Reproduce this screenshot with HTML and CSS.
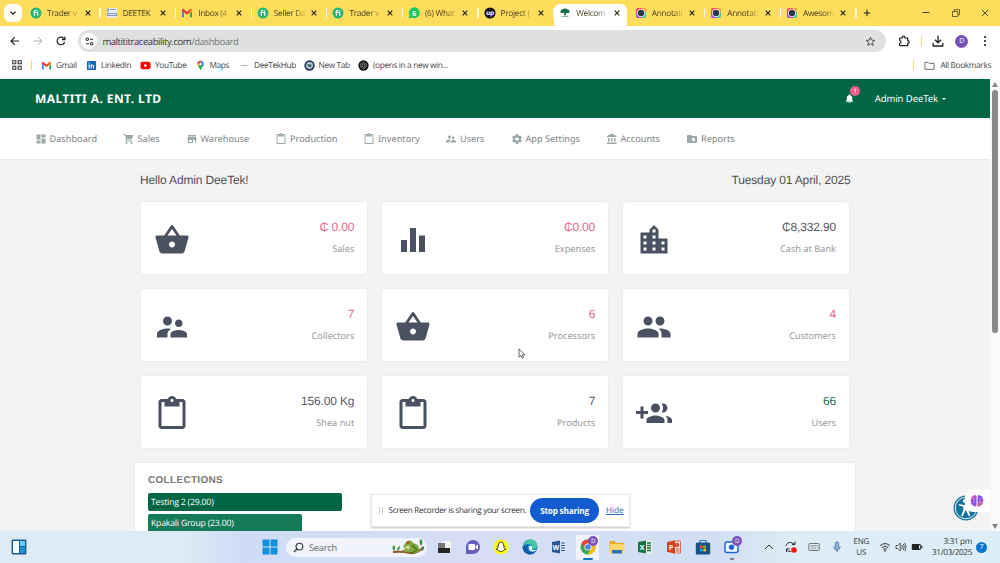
FILE: index.html
```html
<!DOCTYPE html>
<html lang="en">
<head>
  <meta charset="UTF-8">
  <meta name="viewport" content="width=device-width, initial-scale=1.0">
  <title>Welcome</title>
  <link rel="stylesheet" href="styles.css">
</head>
<body>
  <!-- Shared icons -->
  <svg class="sprite" xmlns="http://www.w3.org/2000/svg">
    <symbol id="basket" viewBox="0 0 24 24"><path d="M17.21 9l-4.38-6.56c-.19-.28-.51-.42-.83-.42-.32 0-.64.14-.83.43L6.79 9H2c-.55 0-1 .45-1 1 0 .09.01.18.04.27l2.54 9.27c.23.84 1 1.46 1.92 1.46h13c.92 0 1.69-.62 1.93-1.46l2.54-9.27L23 10c0-.55-.45-1-1-1h-4.79zM9 9l3-4.4L15 9H9zm3 8c-1.1 0-2-.9-2-2s.9-2 2-2 2 .9 2 2-.9 2-2 2z"/></symbol>
    <symbol id="chart" viewBox="0 0 24 24"><path d="M10 20h4V4h-4v16zm-6 0h4v-8H4v8zM16 9v11h4V9h-4z"/></symbol>
    <symbol id="city" viewBox="0 0 24 24"><path d="M15 11V5l-3-3-3 3v2H3v14h18V11h-6zm-8 8H5v-2h2v2zm0-4H5v-2h2v2zm0-4H5V9h2v2zm6 8h-2v-2h2v2zm0-4h-2v-2h2v2zm0-4h-2V9h2v2zm0-4h-2V5h2v2zm6 12h-2v-2h2v2zm0-4h-2v-2h2v2z"/></symbol>
    <symbol id="supervisor" viewBox="0 0 24 24"><path d="M16.5 12c1.38 0 2.49-1.12 2.49-2.5S17.88 7 16.5 7C15.12 7 14 8.12 14 9.5s1.12 2.5 2.5 2.5zM9 11c1.66 0 2.99-1.34 2.99-3S10.66 5 9 5C7.34 5 6 6.34 6 8s1.34 3 3 3zm7.5 3c-1.83 0-5.5.92-5.5 2.75V19h11v-2.25c0-1.83-3.67-2.75-5.5-2.75zM9 13c-2.33 0-7 1.17-7 3.5V19h7v-2.25c0-.85.33-2.34 2.37-3.47C10.5 13.1 9.66 13 9 13z"/></symbol>
    <symbol id="people" viewBox="0 0 24 24"><path d="M16 11c1.66 0 2.99-1.34 2.99-3S17.66 5 16 5c-1.66 0-3 1.34-3 3s1.34 3 3 3zm-8 0c1.66 0 2.99-1.34 2.99-3S9.66 5 8 5C6.34 5 5 6.34 5 8s1.34 3 3 3zm0 2c-2.33 0-7 1.17-7 3.5V19h14v-2.5c0-2.33-4.67-3.5-7-3.5zm8 0c-.29 0-.62.02-.97.05 1.16.84 1.97 1.97 1.97 3.45V19h6v-2.5c0-2.33-4.67-3.5-7-3.5z"/></symbol>
    <symbol id="paste" viewBox="0 0 24 24"><path d="M19 2h-4.18C14.4.84 13.3 0 12 0c-1.3 0-2.4.84-2.82 2H5c-1.1 0-2 .9-2 2v16c0 1.1.9 2 2 2h14c1.1 0 2-.9 2-2V4c0-1.1-.9-2-2-2zm-7 0c.55 0 1 .45 1 1s-.45 1-1 1-1-.45-1-1 .45-1 1-1zm7 18H5V4h2v3h10V4h2v16z"/></symbol>
    <symbol id="group-add" viewBox="0 0 24 24"><path d="M8 10H5V7H3v3H0v2h3v3h2v-3h3v-2zm10 1c1.66 0 2.99-1.34 2.99-3S19.66 5 18 5c-.32 0-.63.05-.91.14.57.81.9 1.79.9 2.86s-.34 2.04-.9 2.86c.28.09.59.14.91.14zm-5 0c1.66 0 2.99-1.34 2.99-3S14.66 5 13 5c-1.66 0-3 1.34-3 3s1.34 3 3 3zm6.62 2.16c.83.73 1.38 1.66 1.38 2.84v2h3v-2c0-1.54-2.37-2.49-4.38-2.84zM13 13c-2 0-6 1-6 3v2h12v-2c0-2-4-3-6-3z"/></symbol>
    <symbol id="dashboard" viewBox="0 0 24 24"><path d="M3 13h8V3H3v10zm0 8h8v-6H3v6zm10 0h8V11h-8v10zm0-18v6h8V3h-8z"/></symbol>
    <symbol id="cart" viewBox="0 0 24 24"><path d="M7 18c-1.1 0-1.99.9-1.99 2S5.9 22 7 22s2-.9 2-2-.9-2-2-2zM1 2v2h2l3.6 7.59-1.35 2.45c-.16.28-.25.61-.25.96 0 1.1.9 2 2 2h12v-2H7.42c-.14 0-.25-.11-.25-.25l.03-.12.9-1.63h7.45c.75 0 1.41-.41 1.75-1.03l3.58-6.49c.08-.14.12-.31.12-.48 0-.55-.45-1-1-1H5.21l-.94-2H1zm16 16c-1.1 0-1.99.9-1.99 2s.89 2 1.99 2 2-.9 2-2-.9-2-2-2z"/></symbol>
    <symbol id="store" viewBox="0 0 24 24"><path d="M20 4H4v2h16V4zm1 10v-2l-1-5H4l-1 5v2h1v6h10v-6h4v6h2v-6h1zm-9 4H6v-4h6v4z"/></symbol>
    <symbol id="settings" viewBox="0 0 24 24"><path d="M19.43 12.98c.04-.32.07-.64.07-.98s-.03-.66-.07-.98l2.11-1.65c.19-.15.24-.42.12-.64l-2-3.46c-.12-.22-.39-.3-.61-.22l-2.49 1c-.52-.4-1.08-.73-1.69-.98l-.38-2.65C14.46 2.18 14.25 2 14 2h-4c-.25 0-.46.18-.49.42l-.38 2.65c-.61.25-1.17.59-1.69.98l-2.49-1c-.23-.09-.49 0-.61.22l-2 3.46c-.13.22-.07.49.12.64l2.11 1.65c-.04.32-.07.65-.07.98s.03.66.07.98l-2.11 1.65c-.19.15-.24.42-.12.64l2 3.46c.12.22.39.3.61.22l2.49-1c.52.4 1.08.73 1.69.98l.38 2.65c.03.24.24.42.49.42h4c.25 0 .46-.18.49-.42l.38-2.65c.61-.25 1.17-.59 1.69-.98l2.49 1c.23.09.49 0 .61-.22l2-3.46c.12-.22.07-.49-.12-.64l-2.11-1.65zM12 15.5c-1.93 0-3.5-1.57-3.5-3.5s1.57-3.5 3.5-3.5 3.5 1.57 3.5 3.5-1.57 3.5-3.5 3.5z"/></symbol>
    <symbol id="bank" viewBox="0 0 24 24"><path d="M4 10v7h3v-7H4zm6 0v7h3v-7h-3zM2 22h19v-3H2v3zm14-12v7h3v-7h-3zm-4.5-9L2 6v2h19V6l-9.500-5z"/></symbol>
    <symbol id="folder-star" viewBox="0 0 24 24"><path d="M20 6h-8l-2-2H4c-1.1 0-2 .9-2 2v12c0 1.1.9 2 2 2h16c1.1 0 2-.9 2-2V8c0-1.1-.9-2-2-2zm-2.06 11L15 15.28 12.06 17l.78-3.33-2.59-2.24 3.41-.29L15 8l1.34 3.14 3.41.29-2.59 2.24.78 3.33z"/></symbol>
    <symbol id="bell" viewBox="0 0 24 24"><path d="M12 22c1.1 0 2-.9 2-2h-4c0 1.1.89 2 2 2zm6-6v-5c0-3.07-1.64-5.64-4.5-6.32V4c0-.83-.67-1.5-1.5-1.5s-1.5.67-1.5 1.5v.68C7.63 5.36 6 7.92 6 11v5l-2 2v1h16v-1l-2-2z"/></symbol>
    <symbol id="close" viewBox="0 0 8 8"><path d="M1.7 1.7l4.6 4.6M6.3 1.7L1.7 6.3" fill="none" stroke="#2b2614" stroke-width="1.2"/></symbol>
    <symbol id="fiverr" viewBox="0 0 12 12"><circle cx="6" cy="6" r="5.5" fill="#22b573"/><path d="M4.4 8.8V4.7q0-1.5 1.6-1.3M3.3 5.4H7.7V8.8" fill="none" stroke="#fff" stroke-width="1.2"/><circle cx="7.7" cy="3.6" r=".7" fill="#fff"/></symbol>
    <symbol id="gmail" viewBox="0 0 12 10"><path d="M1 9.3V2.4h2v6.9z" fill="#4285f4"/><path d="M9 9.3V2.4h2v6.9z" fill="#34a853"/><path d="M1 3V1.2L2.3.8 6 3.8 9.7.8l1.3.6V3L6 6.7z" fill="#ea4335"/><path d="M9 3l2-1.5v2L9 5z" fill="#fbbc04"/></symbol>
    <symbol id="lens" viewBox="0 0 12 12"><path d="M1 3a2 2 0 0 1 2-2h4L6 6 1 8z" fill="#f24e6c"/><path d="M7 1h2a2 2 0 0 1 2 2v3H6z" fill="#ff9c3b"/><path d="M11 5v4a2 2 0 0 1-2 2H6V6z" fill="#43c59a"/><path d="M7 11H3a2 2 0 0 1-2-2V6l5-1z" fill="#a44de0"/><circle cx="6" cy="6" r="3.9" fill="#fff"/><circle cx="6" cy="6" r="3.2" fill="#29384f"/></symbol>
    <symbol id="chrome" viewBox="0 0 16 16"><circle cx="8" cy="8" r="7.5" fill="#34a853"/><path d="M1.5 4.2A7.5 7.5 0 0 1 14.6 4.5H8L5 10z" fill="#ea4335"/><path d="M14.6 4.5A7.5 7.5 0 0 1 7.7 15.5L11 9.5 8 4.5z" fill="#fbbc04"/><circle cx="8" cy="8" r="3.6" fill="#fff"/><circle cx="8" cy="8" r="2.8" fill="#4285f4"/></symbol>
  </svg>

  <!-- Browser tabs -->
  <div class="tab-strip">
    <div class="tab-search"><svg viewBox="0 0 8 8"><path d="M1.5 2.8L4 5.2l2.5-2.4" fill="none" stroke="#222" stroke-width="1.3"/></svg></div>
    <div class="tabs">
      <div class="tab"><svg class="favicon"><use href="#fiverr"/></svg><span>Trader v</span><svg class="close"><use href="#close"/></svg></div>
      <div class="tab"><svg class="favicon" viewBox="0 0 12 12"><path d="M1 1h10v10H1z" fill="#e8edf5"/><path d="M1 1.5h2v3H1zM4 2h6v1H4z" fill="#7fa0d8"/><path d="M1 6h10v3H1z" fill="#7d9ace"/><path d="M2 7.5h8" stroke="#dce6f5"/></svg><span class="whole">DEETEK</span><svg class="close"><use href="#close"/></svg></div>
      <div class="tab"><svg class="favicon"><use href="#gmail"/></svg><span>Inbox (4</span><svg class="close"><use href="#close"/></svg></div>
      <div class="tab"><svg class="favicon"><use href="#fiverr"/></svg><span>Seller Da</span><svg class="close"><use href="#close"/></svg></div>
      <div class="tab"><svg class="favicon"><use href="#fiverr"/></svg><span>Trader v</span><svg class="close"><use href="#close"/></svg></div>
      <div class="tab"><svg class="favicon" viewBox="0 0 12 12"><path d="M.5 11.5l1-3A5.5 5.5 0 1 1 4 10.8z" fill="#20c760"/><text x="6" y="8.6" font-size="7" font-weight="700" text-anchor="middle" fill="#fff">6</text></svg><span>(6) What</span><svg class="close"><use href="#close"/></svg></div>
      <div class="tab"><svg class="favicon" viewBox="0 0 12 12"><circle cx="6" cy="6" r="5.6" fill="#111"/><text x="6" y="8" font-size="6.5" font-weight="700" text-anchor="middle" fill="#fff">up</text></svg><span>Project (</span><svg class="close"><use href="#close"/></svg></div>
      <div class="tab active"><svg class="favicon" viewBox="0 0 12 12"><path d="M1.5 5.5Q1 3 3.5 2.600 6 .6 8.500 2.600 11 3 10.500 5.500 8 6.500 6.800 5.800L7 8.200H5l.2-2.400Q3 6.500 1.500 5.500z" fill="#146b48"/><path d="M2.500 9h7v1h-7z" fill="#89b8a2"/></svg><span>Welcom</span><svg class="close"><use href="#close"/></svg></div>
      <div class="tab"><svg class="favicon"><use href="#lens"/></svg><span>Annotati</span><svg class="close"><use href="#close"/></svg></div>
      <div class="tab"><svg class="favicon"><use href="#lens"/></svg><span>Annotati</span><svg class="close"><use href="#close"/></svg></div>
      <div class="tab"><svg class="favicon"><use href="#lens"/></svg><span>Awesom</span><svg class="close"><use href="#close"/></svg></div>
    </div>
    <svg class="new-tab" viewBox="0 0 8 8"><path d="M4 .7v6.6M.7 4h6.6" stroke="#222" stroke-width="1.1"/></svg>
    <div class="window-controls">
      <svg viewBox="0 0 10 10"><path d="M1.5 4.500h7" stroke="#4b4220"/></svg>
      <svg viewBox="0 0 10 10"><path d="M1.5 3.5h5.3v5H1.5zM3.3 3.3V1.600h5.200v5.100H7" fill="none" stroke="#4b4220" stroke-width=".8"/></svg>
      <svg viewBox="0 0 10 10"><path d="M2 2l6 6M8 2L2 8" stroke="#4b4220" stroke-width=".9"/></svg>
    </div>
  </div>

  <!-- Address bar -->
  <div class="toolbar">
    <svg class="tool" viewBox="0 0 12 12"><path d="M10 6H2.2M5.8 2.2L2 6l3.8 3.8" fill="none" stroke="#222" stroke-width="1.2"/></svg>
    <svg class="tool" viewBox="0 0 12 12"><path d="M2 6h7.8M6.2 2.2L10 6 6.2 9.8" fill="none" stroke="#aaa"/></svg>
    <svg class="tool" viewBox="0 0 12 12"><path d="M9.6 7A3.8 3.8 0 1 1 8.8 3.4L9.8 4.3M9.9 1.6v3H6.8" fill="none" stroke="#222" stroke-width="1.2"/></svg>
    <div class="address">
      <div class="site-info"><svg viewBox="0 0 12 12"><path d="M6.500 3.500H10M2 8.500h3.500" stroke="#333" stroke-width="1.2"/><circle cx="3.6" cy="3.5" r="1.4" fill="none" stroke="#333" stroke-width="1.1"/><circle cx="8.4" cy="8.5" r="1.4" fill="none" stroke="#333" stroke-width="1.1"/></svg></div>
      <div class="url">maltititraceability.com<span>/dashboard</span></div>
      <svg class="star" viewBox="0 0 12 12"><path d="M6 1.4l1.3 3.1 3.3.3-2.5 2.2.8 3.3L6 8.5l-2.9 1.8.8-3.3L1.4 4.8l3.3-.3z" fill="none" stroke="#444"/></svg>
    </div>
    <div class="toolbar-right">
      <svg viewBox="0 0 12 12"><path d="M1.7 3h2.600q0-1.800 1.300-1.800T7 3h2.700v2.700q1.500 0 1.500 1.300T9.700 8.300v2.400h-8V8.200q1.300-.1 1.300-1.300T1.700 5.500z" fill="none" stroke="#222" stroke-width="1.2"/></svg>
      <i class="divider"></i>
      <svg viewBox="0 0 12 12"><path d="M6 .8v6.800M3 4.800l3 3 3-3M1.200 8v3h9.600V8" fill="none" stroke="#222" stroke-width="1.3"/></svg>
      <div class="avatar">D</div>
      <svg viewBox="0 0 12 12"><g fill="#222"><circle cx="6" cy="2" r="1.1"/><circle cx="6" cy="6" r="1.1"/><circle cx="6" cy="10" r="1.1"/></g></svg>
    </div>
  </div>

  <!-- Bookmarks -->
  <div class="bookmarks">
    <svg class="apps" viewBox="0 0 10 10"><path d="M.8.8h3v3h-3zM6.200.8h3v3h-3zM.8 6.200h3v3h-3zM6.200 6.200h3v3h-3z" fill="none" stroke="#333" stroke-width="1.1"/></svg>
    <i class="divider"></i>
    <div class="bookmark gmail"><svg><use href="#gmail"/></svg>Gmail</div>
    <div class="bookmark linkedin"><svg viewBox="0 0 12 12"><rect x="1" y="1" width="10" height="10" rx="1" fill="#1467bd"/><path d="M3.4 5v4.3M5.6 9.3V5M5.6 7q0-1.5 1.3-1.5T8.3 7v2.3M3.4 2.8v1.1" fill="none" stroke="#fff" stroke-width="1.2"/></svg>LinkedIn</div>
    <div class="bookmark youtube"><svg viewBox="0 0 12 12"><rect x=".5" y="2" width="11" height="8" rx="2" fill="#f00"/><path d="M4.8 4.2L8 6 4.8 7.8z" fill="#fff"/></svg>YouTube</div>
    <div class="bookmark maps"><svg viewBox="0 0 12 12"><path d="M6 11.8Q5.6 9.3 3.4 7L6 4l3.6 1Q9.3 7 7.5 8.5 6.4 10 6 11.8z" fill="#34a853"/><path d="M2.4 3.5L5 5.5 3.4 7Q2 5.5 2.4 3.5z" fill="#fbbc04"/><path d="M2.4 3.5Q3.3 1 6 .6L7.5.9 5 5.5z" fill="#ea4335"/><path d="M7.5.9Q10 2 9.7 5L7 6.5 5 5.5z" fill="#4285f4"/><circle cx="6" cy="4.3" r="1.3" fill="#fff"/></svg>Maps</div>
    <div class="bookmark hub"><svg viewBox="0 0 12 12"><path d="M2 6h8" stroke="#aaa"/></svg>DeeTekHub</div>
    <div class="bookmark new"><svg viewBox="0 0 12 12"><circle cx="6" cy="6" r="5.6" fill="#26315c"/><circle cx="6" cy="6" r="3.8" fill="#b9c8cf"/><path d="M3 4.5h5v3H5z" fill="#3c6d55"/></svg>New Tab</div>
    <div class="bookmark opens"><svg viewBox="0 0 12 12"><circle cx="6" cy="6" r="5.6" fill="#151515"/><path d="M6 2.5l3 1.8v3.4L6 9.5 3 7.7V4.3zM6 4.3l1.5.8v1.8L6 7.7l-1.5-.8V5.1z" fill="none" stroke="#bbb" stroke-width=".6"/></svg>(opens in a new win...</div>
    <div class="all-bookmarks"><i class="divider"></i><svg viewBox="0 0 12 12"><path d="M1 2.5h3.5l1.2 1.2H11v6.5H1z" fill="none" stroke="#555" stroke-width=".9"/></svg>All Bookmarks</div>
  </div>

  <!-- Web page -->
  <div class="viewport">
    <div class="page">
      <header class="topbar">
        <div class="brand">MALTITI A. ENT. LTD</div>
        <div class="notifications"><svg><use href="#bell"/></svg><span>1</span></div>
        <div class="user">Admin DeeTek <i class="caret"></i></div>
      </header>

      <nav class="menu">
        <a class="dashboard"><svg><use href="#dashboard"/></svg>Dashboard</a>
        <a class="sales"><svg><use href="#cart"/></svg>Sales</a>
        <a class="warehouse"><svg><use href="#store"/></svg>Warehouse</a>
        <a class="production"><svg><use href="#paste"/></svg>Production</a>
        <a class="inventory"><svg><use href="#paste"/></svg>Inventory</a>
        <a class="users"><svg><use href="#supervisor"/></svg>Users</a>
        <a class="app-settings"><svg><use href="#settings"/></svg>App Settings</a>
        <a class="accounts"><svg><use href="#bank"/></svg>Accounts</a>
        <a class="reports"><svg><use href="#folder-star"/></svg>Reports</a>
      </nav>

      <main>
        <div class="greeting">
          <div>Hello Admin DeeTek!</div>
          <div>Tuesday 01 April, 2025</div>
        </div>

        <div class="cards">
          <div class="card"><svg><use href="#basket"/></svg><div><h4 class="pink">₵ 0.00</h4><p>Sales</p></div></div>
          <div class="card"><svg><use href="#chart"/></svg><div><h4 class="pink">₵0.00</h4><p>Expenses</p></div></div>
          <div class="card"><svg><use href="#city"/></svg><div><h4>₵8,332.90</h4><p>Cash at Bank</p></div></div>
          <div class="card"><svg><use href="#supervisor"/></svg><div><h4 class="pink">7</h4><p>Collectors</p></div></div>
          <div class="card"><svg><use href="#basket"/></svg><div><h4 class="pink">6</h4><p>Processors</p></div></div>
          <div class="card"><svg><use href="#people"/></svg><div><h4 class="pink">4</h4><p>Customers</p></div></div>
          <div class="card"><svg><use href="#paste"/></svg><div><h4>156.00 Kg</h4><p>Shea nut</p></div></div>
          <div class="card"><svg><use href="#paste"/></svg><div><h4>7</h4><p>Products</p></div></div>
          <div class="card"><svg><use href="#group-add"/></svg><div><h4 class="green">66</h4><p>Users</p></div></div>
        </div>

        <section class="collections">
          <h3>COLLECTIONS</h3>
          <div class="bar" style="width: 194px">Testing 2 (29.00)</div>
          <div class="bar second" style="width: 153.5px">Kpakali Group (23.00)</div>
        </section>
      </main>
    </div>

    <div class="scrollbar">
      <i class="arrow-up"></i>
      <div class="thumb"></div>
      <i class="arrow-down"></i>
    </div>

    <svg class="accessibility" viewBox="0 0 26 26"><circle cx="13" cy="13" r="12.5" fill="#17759c"/><circle cx="13" cy="13" r="10.8" fill="none" stroke="#fff" stroke-width=".9"/><circle cx="12" cy="6" r="2" fill="#fff"/><path d="M6 9l5 1h3l6-1v1.5l-5 1.2.6 4 1.7 5-1.4.5-3-6h-.6l-2.6 6-1.5-.5 2-5 .3-4L6 10.5z" fill="#fff"/></svg>
    <div class="brain"><svg viewBox="0 0 14 14"><defs><linearGradient id="mind" x1="0" x2="1" y1="0" y2="1"><stop offset="0" stop-color="#f052b8"/><stop offset=".5" stop-color="#7c4df0"/><stop offset="1" stop-color="#ff7a45"/></linearGradient></defs><path d="M6.5 2Q5 0 3.3 2 1 2.3 1.5 4.6-.2 6.5 1 8.5q-.2 2.5 2.3 3Q5 13.8 6.5 12zM7.5 2Q9 0 10.7 2q2.3.3 1.8 2.6 1.7 1.9.5 3.9.2 2.5-2.3 3Q9 13.8 7.5 12z" fill="url(#mind)"/><path d="M3.2 4.5l1.5 1M2.8 8.5l2-.7M10.8 4.5l-1.5 1M11.2 8.5l-2-.7" stroke="#fff" stroke-width=".6"/></svg></div>
    <svg class="cursor" viewBox="0 0 8 11"><path d="M1 .8v8.4l2-1.9 1.3 2.9 1.3-.6L4.4 6.9H7z" fill="#fff" stroke="#444" stroke-width=".8"/></svg>

    <div class="share-bar">
      <i class="grip"></i>
      <p>Screen Recorder is sharing your screen.</p>
      <button>Stop sharing</button>
      <a>Hide</a>
    </div>
  </div>

  <!-- Windows taskbar -->
  <div class="taskbar">
    <svg class="widgets" viewBox="0 0 16 16"><rect x=".6" y=".6" width="14.8" height="14.8" rx="1" fill="#1b5d8e"/><path d="M2 2h6v12H2z" fill="#f4fbff"/><path d="M9 2h5v5H9z" fill="#67cdfa"/><path d="M9 8h5v6H9z" fill="#208dd5"/></svg>
    <svg class="start" viewBox="0 0 16 16"><path d="M.5.5h7v7h-7zM8.5.5h7v7h-7zM.5 8.5h7v7h-7zM8.5 8.5h7v7h-7z" fill="#148fdb"/></svg>
    <div class="search">
      <svg class="magnifier" viewBox="0 0 12 12"><circle cx="7" cy="5" r="3.7" fill="none" stroke="#333" stroke-width="1.2"/><path d="M4.3 7.7L1 11" stroke="#333" stroke-width="1.4"/></svg>
      Search
      <svg class="frog" viewBox="0 0 33 18"><path d="M1 14q10-1 17 1 8 1 13-6" fill="none" stroke="#8a5a2c" stroke-width="2"/><path d="M11 9Q13 4 16 3q3-2 5 2 7 1 6 8-4 4-8 1-5 1-9-2l4-1z" fill="#7fa63a"/><path d="M12 8q4 1 6-1l-1 5z" fill="#d8dfa4"/><circle cx="16" cy="4.5" r="1.2" fill="#a83920"/><path d="M20 7l5 5-5 3" fill="none" stroke="#476f24" stroke-width="1.2"/><path d="M2 13Q-1 9 2 7q2 3 0 6zM5 13q0-4 3-5 0 4-3 5zM29 8q-3-5 0-7 3 3 0 7zM29 13q0-4 3-5 1 4-3 5z" fill="#438844"/></svg>
    </div>
    <div class="task-icons">
      <div><svg viewBox="0 0 16 16"><path d="M6 2h9v10H6z" fill="#eff1f4"/><path d="M2 4h7v7H2z" fill="#777"/><path d="M2 9h12v5H2z" fill="#242424"/></svg></div>
      <div><svg viewBox="0 0 16 16"><path d="M1 15V7.5A7 7 0 1 1 8 15z" fill="#6461bd"/><rect x="3.5" y="5" width="6.5" height="6" rx="1" fill="#fff"/><path d="M10.5 7.2L13 5.5v5l-2.5-1.7z" fill="#fff"/></svg></div>
      <div><svg viewBox="0 0 16 16"><circle cx="8" cy="8" r="7.5" fill="#fffc00"/><path d="M8 3q2.6 0 2.6 3v1.3l1.2-.1-.9 1.3q.5 1.5 2 1.8l-2.1.7-.8 1-2 .8-2-.8-.8-1-2.1-.7q1.5-.3 2-1.8l-.9-1.3 1.2.1V6Q5.4 3 8 3z" fill="#fff" stroke="#222" stroke-width=".8"/></svg></div>
      <div><svg viewBox="0 0 16 16"><circle cx="8" cy="8" r="7.5" fill="#1688c9"/><path d="M.7 8Q2 1 8 .5q7 0 7.5 6.5-.5 3.5-5 3Q11 6 7.5 5 3 4.5.7 8z" fill="#45c5a1"/><path d="M.7 8Q3 4.5 6.5 6 4 10 8 12.5q3 1.2 5.6 0Q11 16 6.5 15.3 1 14 .7 8z" fill="#145ba8"/><path d="M7 7.5q2-1.5 3.2 0 .5 2-.5 3 2.5 1.5 5.3 0-2 2.5-5.2 2Q6 11 7 7.5z" fill="#eaf8ff"/></svg></div>
      <div><svg viewBox="0 0 16 16"><path d="M5 1.5h10v13H5z" fill="#d8e5f7"/><path d="M10 4h4M10 6.5h4M10 9h4M10 11.5h4" stroke="#2b5797"/><path d="M1 3l8-1.5v13L1 13z" fill="#2b5797"/><text x="5" y="10.6" font-size="7" font-weight="700" text-anchor="middle" fill="#fff">W</text></svg></div>
      <div class="running"><svg><use href="#chrome"/></svg><b>D</b></div>
      <div><svg viewBox="0 0 16 16"><path d="M.5 2h5l1.5 2h8v10H.5z" fill="#e8a91e"/><path d="M.5 5h15v9.5H.5z" fill="#ffd66b"/><path d="M3 11h10v3.5H3z" fill="#2675b8"/></svg></div>
      <div><svg viewBox="0 0 16 16"><path d="M6 1.5h9v13H6z" fill="#e1f2e7"/><path d="M10 4h4M10 6.5h4M10 9h4M10 11.5h4" stroke="#1d7044" stroke-width="1.6"/><path d="M1 3l8-1.5v13L1 13z" fill="#1d7044"/><text x="5" y="10.6" font-size="7" font-weight="700" text-anchor="middle" fill="#fff">X</text></svg></div>
      <div><svg viewBox="0 0 16 16"><path d="M6 1.5h9v13H6z" fill="#fbe5df"/><path d="M6.5 2h8v12h-8z" fill="none" stroke="#d35230" stroke-width=".8"/><circle cx="11" cy="6" r="2.3" fill="#d35230"/><path d="M10 10h3.5M10 12h3.5" stroke="#d35230"/><path d="M1 3l8-1.5v13L1 13z" fill="#d04423"/><text x="5" y="10.6" font-size="7" font-weight="700" text-anchor="middle" fill="#fff">P</text></svg></div>
      <div><svg viewBox="0 0 16 16"><path d="M5 4V1.5h6V4" fill="none" stroke="#2d7bc0" stroke-width="1.2"/><rect x=".8" y="3.5" width="14.4" height="12" rx="1.5" fill="#184f86"/><path d="M5 6.500h2.700v2.700H5z" fill="#f25022"/><path d="M8.300 6.500H11v2.700H8.300z" fill="#7fba00"/><path d="M5 9.800h2.700v2.700H5z" fill="#00a4ef"/><path d="M8.300 9.800H11v2.700H8.300z" fill="#ffb900"/></svg></div>
      <div class="recorder"><svg viewBox="0 0 16 16"><rect x="1" y="3" width="13" height="10.5" rx="2" fill="#f7fbff" stroke="#2465d2" stroke-width="1.5"/><circle cx="7.5" cy="8.2" r="2.7" fill="#2465d2"/></svg><b>D</b></div>
    </div>
    <div class="tray">
      <svg viewBox="0 0 12 12"><path d="M2 8l4-4 4 4" fill="none" stroke="#333"/></svg>
      <svg viewBox="0 0 12 12"><path d="M1 5q1-4 5-3.500L9.500 3M10 .5V3.500H7M1.500 11V7.800h3M1.500 8.500Q3 11 6 10.500" fill="none" stroke="#333"/><circle cx="9" cy="9" r="2.8" fill="#ed1919"/></svg>
      <svg viewBox="0 0 12 12"><rect x=".8" y="2.5" width="10.4" height="7" rx="1" fill="none" stroke="#555" stroke-width=".8"/><path d="M2.5 4.5h7M2.5 6h7M3.5 7.8h5" stroke="#555" stroke-width=".7" stroke-dasharray="1 .6"/></svg>
      <svg viewBox="0 0 12 12"><rect x="4.3" y=".8" width="3.4" height="6.5" rx="1.7" fill="#8ab6df" stroke="#346a9e" stroke-width=".7"/><path d="M2.8 5.5Q3 9 6 9t3.2-3.5M6 9v2.3" fill="none" stroke="#346a9e" stroke-width=".9"/></svg>
    </div>
    <div class="language">ENG<br>US</div>
    <div class="status">
      <svg viewBox="0 0 12 12"><path d="M1 4.7q5-4.2 10 0M2.6 6.6q3.4-2.9 6.8 0M4.2 8.4q1.8-1.5 3.6 0" fill="none" stroke="#333"/><circle cx="6" cy="9.8" r=".9" fill="#333"/></svg>
      <svg viewBox="0 0 12 12"><path d="M1 4.5h1.8L5.3 2v8L2.8 7.5H1zM6.8 4q1.2 2 0 4M8.3 2.9q2 3.1 0 6.2M9.8 1.8q2.6 4.2 0 8.4" fill="none" stroke="#333" stroke-width=".8"/></svg>
      <svg viewBox="0 0 12 12"><rect x=".8" y="3" width="9" height="6" rx="1" fill="#222"/><path d="M8 4.2h1v3.6H8z" fill="#dcebf6"/><path d="M10.2 4.8h1.2v2.4h-1.2z" fill="#222"/></svg>
    </div>
    <div class="clock">3:31 pm<br>31/03/2025</div>
    <div class="count">7</div>
  </div>
</body>
</html>
```
FILE: styles.css
```css
* {
  margin: 0;
  padding: 0;
  box-sizing: border-box;
}

body {
  width: 1000px;
  height: 563px;
  overflow: hidden;
  display: flex;
  flex-direction: column;
  background: #fff;
  font-family: 'Open Sans', 'Noto Sans', sans-serif;
  font-size: 9px;
  color: #333;
  text-rendering: geometricPrecision;
}

svg {
  display: block;
  flex: none;
}

.sprite {
  position: absolute;
  width: 0;
  height: 0;
}

/* Browser tabs */
.tab-strip {
  height: 26px;
  flex: none;
  display: flex;
  align-items: center;
  background: #ffdd5c;
}

.tab-search {
  width: 18px;
  height: 18px;
  margin-left: 4px;
  border-radius: 6px;
  background: #fffdf5;
  display: grid;
  place-items: center;
}

.tab-search svg {
  width: 8px;
  height: 8px;
}

.tabs {
  display: flex;
  align-self: stretch;
  margin-left: 3px;
}

.tab {
  width: 75.6px;
  position: relative;
  display: flex;
  align-items: center;
  padding-left: 5px;
  font-size: 8.3px;
  letter-spacing: -0.3px;
  white-space: nowrap;
  color: #4a4122;
}

.tab::after {
  content: '';
  position: absolute;
  right: 0;
  top: 8px;
  width: 1.2px;
  height: 10px;
  background: #fff5ce;
}

.tab .favicon {
  width: 12px;
  height: 12px;
}

.tab span {
  width: 32px;
  margin-left: 5px;
  -webkit-mask-image: linear-gradient(90deg, #000 65%, rgba(0, 0, 0, 0.1));
  mask-image: linear-gradient(90deg, #000 65%, rgba(0, 0, 0, 0.1));
}

.tab span.whole {
  -webkit-mask-image: none;
  mask-image: none;
}

.tab .close {
  width: 8px;
  height: 8px;
  margin-left: 4.5px;
}

.tab.active::before {
  content: '';
  position: absolute;
  left: 0;
  right: 3px;
  top: 4px;
  bottom: 0;
  background: #fff;
  border-radius: 6px 6px 0 0;
}

.tab.active > * {
  position: relative;
}

.tab.active::after {
  display: none;
}

.new-tab {
  width: 8px;
  height: 8px;
  margin-left: 6px;
}

.window-controls {
  margin-left: auto;
  margin-right: 10px;
  display: flex;
  gap: 19.5px;
}

.window-controls svg {
  width: 10px;
  height: 10px;
}

/* Address bar */
.toolbar {
  height: 30px;
  flex: none;
  display: flex;
  align-items: center;
  padding-left: 8.5px;
}

.tool {
  width: 12px;
  height: 12px;
  margin-right: 11.3px;
}

.address {
  width: 808px;
  height: 22px;
  border-radius: 11px;
  background: #dfe1e1;
  display: flex;
  align-items: center;
  padding: 0 10px 0 3px;
}

.site-info {
  width: 16px;
  height: 16px;
  border-radius: 50%;
  background: #fff;
  display: grid;
  place-items: center;
}

.site-info svg {
  width: 11px;
  height: 11px;
}

.url {
  flex: 1;
  margin-left: 5px;
  font-size: 9.5px;
  letter-spacing: -0.42px;
}

.url span {
  color: #747777;
}

.star {
  width: 11px;
  height: 11px;
}

.toolbar-right {
  flex: 1;
  display: flex;
  align-items: center;
  justify-content: space-between;
  padding: 0 9px 0 11.5px;
}

.toolbar-right svg {
  width: 12px;
  height: 12px;
}

.divider {
  width: 1px;
  height: 10px;
  background: #f6dc70;
}

.avatar {
  width: 13px;
  height: 13px;
  border-radius: 50%;
  background: #7651b8;
  color: #fff;
  font-size: 7px;
  line-height: 13px;
  text-align: center;
}

/* Bookmarks */
.bookmarks {
  height: 23px;
  flex: none;
  display: flex;
  align-items: center;
  padding: 0 9px 5px 12px;
  font-size: 8.3px;
  letter-spacing: -0.36px;
  white-space: nowrap;
  color: #484848;
}

.apps {
  width: 10px;
  height: 10px;
}

.bookmarks > .divider {
  margin: 0 9px;
}

.bookmark {
  display: flex;
  align-items: center;
  gap: 4px;
}

.bookmark svg,
.all-bookmarks svg {
  width: 11px;
  height: 11px;
}

.gmail { width: 45px; }
.linkedin { width: 54px; }
.youtube { width: 54.5px; }
.maps { width: 44.5px; }
.hub { width: 64.5px; }
.new { width: 54.5px; }

.all-bookmarks {
  margin-left: auto;
  display: flex;
  align-items: center;
  gap: 5px;
}

.all-bookmarks .divider {
  margin-right: 5px;
}

/* Web page */
.viewport {
  height: 452px;
  flex: none;
  position: relative;
  display: flex;
  overflow: hidden;
}

.page {
  width: 990px;
  background: #f3f3f3;
}

.topbar {
  height: 39px;
  background: #026645;
  color: #fff;
  display: flex;
  align-items: center;
  padding: 0 44px 0 35px;
}

.brand {
  flex: 1;
  font-family: 'Noto Sans', sans-serif;
  font-size: 12px;
  font-weight: 700;
  letter-spacing: 0.42px;
}

.notifications {
  position: relative;
  margin-right: 19.5px;
}

.notifications svg {
  width: 11px;
  height: 11px;
  fill: #fff;
}

.notifications span {
  position: absolute;
  left: 6px;
  top: -7px;
  width: 10px;
  height: 10px;
  border-radius: 50%;
  background: #f15c8e;
  font-size: 6px;
  line-height: 10px;
  text-align: center;
}

.user {
  font-family: 'Noto Sans', sans-serif;
  font-size: 9.5px;
  letter-spacing: -0.08px;
  display: flex;
  align-items: center;
}

.caret {
  margin-left: 4px;
  border: 2.5px solid transparent;
  border-top-color: #fff;
  border-bottom: 0;
}

.menu {
  height: 42px;
  background: #fff;
  border-bottom: 1px solid #e9e9e9;
  display: flex;
  align-items: center;
  padding-left: 34.5px;
  font-family: 'Noto Sans', sans-serif;
  font-size: 9.2px;
  color: #808485;
}

.menu a {
  display: flex;
  align-items: center;
  gap: 3px;
  white-space: nowrap;
}

.menu svg {
  width: 12px;
  height: 12px;
  fill: #9ba8a8;
}

.menu .dashboard { width: 88px; }
.menu .sales { width: 63px; }
.menu .warehouse { width: 89.5px; }
.menu .production { width: 88px; }
.menu .inventory { width: 82px; }
.menu .users { width: 65.5px; }
.menu .app-settings { width: 95px; }
.menu .accounts { width: 80.5px; }

.greeting {
  display: flex;
  justify-content: space-between;
  padding: 12px 139.5px 0 140px;
  font-family: 'Liberation Sans', sans-serif;
  font-size: 12px;
  line-height: 16px;
  letter-spacing: -0.15px;
  color: #505050;
}

.cards {
  display: grid;
  grid-template-columns: repeat(3, 1fr);
  grid-auto-rows: 72px;
  gap: 15px 14.5px;
  width: 708px;
  margin: 14px 0 0 141px;
}

.card {
  display: flex;
  align-items: center;
  justify-content: space-between;
  padding: 0 13px;
  background: #fff;
  border-radius: 2px;
  box-shadow: 0 0 1.5px rgba(0, 0, 0, 0.12);
}

.card svg {
  width: 36px;
  height: 36px;
  margin-top: 4px;
  fill: #4a5261;
}

.card > div {
  margin-top: -1.5px;
  text-align: right;
}

.card h4 {
  font-family: 'Liberation Sans', 'Noto Sans', sans-serif;
  font-size: 12px;
  font-weight: 400;
  line-height: 15px;
  letter-spacing: -0.15px;
  color: #555a60;
}

.card p {
  margin-top: 6.5px;
  font-family: 'Noto Sans', sans-serif;
  font-size: 9.2px;
  line-height: 13px;
  color: #969b9e;
}

.card .pink {
  color: #e3638d;
}

.card .green {
  color: #14704f;
}

.collections {
  width: 720px;
  height: 100px;
  margin: 15px 0 0 135px;
  padding: 11px 13px;
  background: #fff;
  border-radius: 2px;
  box-shadow: 0 0 1.5px rgba(0, 0, 0, 0.12);
}

.collections h3 {
  font-family: 'Liberation Sans', sans-serif;
  font-size: 10px;
  line-height: 13px;
  letter-spacing: 0.3px;
  color: #777;
  margin-bottom: 6px;
}

.bar {
  height: 18px;
  margin-bottom: 2.5px;
  padding-left: 3px;
  border-radius: 2px;
  background: #026645;
  color: #fff;
  font-size: 8.7px;
  line-height: 18px;
  letter-spacing: -0.2px;
}

.bar.second {
  background: #157a58;
}

.scrollbar {
  width: 10px;
  background: #fafafa;
  display: flex;
  flex-direction: column;
  align-items: center;
}

.arrow-up,
.arrow-down {
  border: 3px solid transparent;
}

.arrow-up {
  margin-top: 3px;
  border-top: 0;
  border-bottom: 5px solid #858585;
}

.arrow-down {
  margin: auto 0 2px;
  border-bottom: 0;
  border-top: 5px solid #858585;
}

.thumb {
  width: 6px;
  height: 243px;
  margin-top: 3px;
  border-radius: 3px;
  background: #8a8a8a;
}

/* Overlays on the page */
.accessibility {
  position: absolute;
  left: 953px;
  top: 416px;
  width: 26px;
  height: 26px;
}

.brain {
  position: absolute;
  left: 965px;
  top: 410px;
  width: 25px;
  height: 23px;
  padding: 5px 0 0 5px;
  border-radius: 8px 0 0 8px;
  background: #fff;
}

.brain svg {
  width: 14px;
  height: 14px;
}

.cursor {
  position: absolute;
  left: 517.5px;
  top: 268.5px;
  width: 8px;
  height: 11px;
}

.share-bar {
  position: absolute;
  left: 371px;
  top: 414.5px;
  width: 259px;
  height: 33.5px;
  display: flex;
  align-items: center;
  padding-left: 7px;
  background: #fff;
  border: 1px solid #eee9e5;
  box-shadow: 0 1px 2px rgba(0, 0, 0, 0.25);
  font-size: 8.2px;
  white-space: nowrap;
}

.grip {
  width: 4px;
  height: 7px;
  border: 1px solid #ccc;
  border-width: 0 1px;
}

.share-bar p {
  width: 135px;
  margin-left: 5.5px;
  letter-spacing: -0.33px;
}

.share-bar button {
  width: 69px;
  height: 25px;
  margin-left: 6.5px;
  border: 0;
  border-radius: 13px;
  background: #125bd0;
  color: #fff;
  font: 700 8.2px 'Open Sans', sans-serif;
  letter-spacing: -0.2px;
}

.share-bar a {
  margin-left: 7px;
  color: #286cae;
  text-decoration: underline;
}

/* Windows taskbar */
.taskbar {
  height: 32px;
  flex: none;
  display: flex;
  align-items: center;
  background: linear-gradient(90deg, #deebf4 0, #deebf4 18%, #cfdcf5 24%, #d6def4 50%, #d1dff3 72%, #deecf5 80%, #dceef8);
}

.widgets {
  width: 16px;
  height: 16px;
  margin-left: 11px;
}

.start {
  width: 16px;
  height: 16px;
  margin-left: 234.5px;
}

.search {
  width: 141px;
  height: 19px;
  margin-left: 8.5px;
  border-radius: 10px;
  background: #f1f4fb;
  display: flex;
  align-items: center;
  padding: 0 2px 0 7px;
  font-size: 9.2px;
  letter-spacing: -0.2px;
  color: #666;
}

.magnifier {
  width: 11px;
  height: 11px;
  margin-right: 5px;
}

.frog {
  width: 33px;
  height: 18px;
  margin-left: auto;
}

.task-icons {
  display: flex;
  margin-left: 2.5px;
}

.task-icons div {
  position: relative;
  width: 28.8px;
  height: 25px;
  display: grid;
  place-items: center;
}

.task-icons svg {
  width: 16px;
  height: 16px;
}

.task-icons b {
  position: absolute;
  right: 4px;
  top: 1px;
  width: 10px;
  height: 10px;
  border-radius: 50%;
  background: #7953ba;
  color: #fff;
  font-size: 6px;
  font-weight: 400;
  line-height: 10px;
  text-align: center;
}

.task-icons .running {
  background: linear-gradient(#f1f2fa, #f1f2fa) center / 23px 25px no-repeat;
}

.running::after,
.recorder::after {
  content: '';
  position: absolute;
  bottom: 0;
  width: 10px;
  height: 2px;
  border-radius: 1px;
  background: #0c73cc;
}

.recorder::after {
  width: 4px;
  background: #777;
}

.tray {
  display: flex;
  gap: 10.7px;
  margin-left: 16.5px;
}

.tray svg {
  width: 12px;
  height: 12px;
}

.language {
  width: 24px;
  margin-left: 6.5px;
  font-size: 8px;
  line-height: 11px;
  letter-spacing: -0.15px;
  text-align: center;
}

.status {
  display: flex;
  gap: 4px;
  margin-left: 6px;
}

.status svg {
  width: 12px;
  height: 12px;
}

.clock {
  margin-left: auto;
  font-size: 8.2px;
  line-height: 11px;
  letter-spacing: -0.35px;
  text-align: right;
}

.count {
  width: 11px;
  height: 11px;
  margin: 0 13px 0 4px;
  border-radius: 50%;
  background: #0875c9;
  color: #fff;
  font-size: 7px;
  line-height: 11px;
  text-align: center;
}
```
